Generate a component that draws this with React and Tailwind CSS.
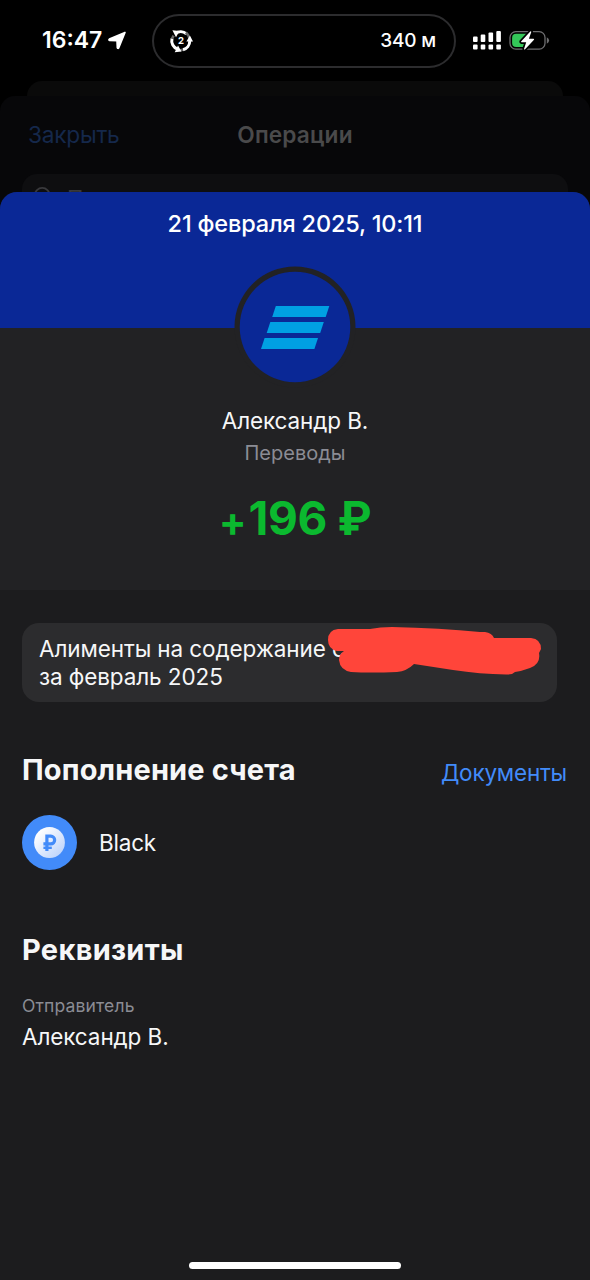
import React from 'react';

function StatusBar() {
  return (
    <div className="flex items-start h-[81px] pt-[14px] text-white">
      <div className="flex items-center w-[152px] h-[53px] pl-[42px]">
        <span className="text-[23px] font-semibold w-[65px] whitespace-nowrap">16:47</span>
        <svg className="w-[20px] h-[20px]" viewBox="0 0 20 20" fill="#fff" stroke="#fff" strokeWidth="1.6" strokeLinejoin="round">
          <path d="M18 1.4 L2.4 8 Q1.3 9 2.6 9.4 L10 9.8 L10.3 16.6 Q10.9 18 11.8 16.7 Z" />
        </svg>
      </div>

      {/* Navigation pill */}
      <div className="flex items-center justify-between w-[304px] h-[54px] pl-[15px] pr-[18px] rounded-full border-2 border-[#2c2c2e]">
        <svg className="w-[24px] h-[24px]" viewBox="0 0 24 24">
          <g fill="none" stroke="#fff" strokeWidth="3">
            <path d="M6.3 4.5 A9.2 9.2 0 0 1 17.5 4.9" />
            <path d="M20.8 12 A9.2 9.2 0 0 1 14 20.7" />
            <path d="M8.8 20.4 A9.2 9.2 0 0 1 3 9.5" />
          </g>
          <path d="M16.8 3.6 A9.6 9.6 0 0 1 20.5 9.4 M13.9 20.8 L10.9 21.2 M3.1 9.5 L4.6 6.6" fill="none" stroke="#6b6b6b" strokeWidth="2.6" />
          <g fill="#fff">
            <path d="M3.4 1.2 L10.4 2 L7 8.3 Z" />
            <path d="M17.4 12.6 L20.9 6.6 L24 12.6 Z" />
            <path d="M9 16.6 L12.5 22.6 L5.7 23.2 Z" />
          </g>
          <text x="12" y="15.3" fontSize="9.5" fontWeight="700" textAnchor="middle" fill="#fff" fontFamily="Inter, sans-serif">2</text>
        </svg>
        <span className="pt-px text-[19px] font-medium tracking-[-0.15px] whitespace-nowrap">340 м</span>
      </div>

      <div className="flex items-center h-[53px] pl-[16px] gap-[7px]">
        <svg className="w-[30px] h-[20px]" viewBox="0 0 30 20" fill="#fff">
          <rect x="1" y="5.5" width="4.6" height="5.5" rx="1" />
          <rect x="8.7" y="3.5" width="4.6" height="7.5" rx="1" />
          <rect x="16.5" y="1.5" width="4.6" height="9.5" rx="1" />
          <rect x="24.3" y="0" width="4.6" height="11" rx="1" />
          <rect x="1" y="13.5" width="4.6" height="5" rx="1" />
          <rect x="8.7" y="13.5" width="4.6" height="5" rx="1" />
          <rect x="16.5" y="13.5" width="4.6" height="5" rx="1" />
          <rect x="24.3" y="13.5" width="4.6" height="5" rx="1" />
        </svg>
        <svg className="w-[42px] h-[20px]" viewBox="0 0 42 20">
          <rect x="1" y="0.7" width="35" height="17.4" rx="5.8" fill="none" stroke="#6e6e70" strokeWidth="1.3" />
          <path d="M37.8 6.3 Q40.1 7.5 40.1 9.5 Q40.1 11.5 37.8 12.7 Z" fill="#6e6e70" />
          <path d="M7.2 2.8 H18 V16 H7.2 Q3.1 16 3.1 11.9 V6.9 Q3.1 2.8 7.2 2.8 Z" fill="#34c759" />
          <path d="M21.3 0.6 L12.1 10.4 Q11.8 11.2 12.6 11.3 H17.2 L15 17.9 Q15.1 19 16.1 18.3 L25 8.7 Q25.3 7.8 24.5 7.7 H19.9 L22.3 1.1 Q22.1 -0.1 21.3 0.6 Z" fill="#fff" stroke="#000" strokeWidth="3.4" paintOrder="stroke" />
        </svg>
      </div>
    </div>
  );
}

function OperationsBehind() {
  return (
    <div className="h-[96px] overflow-hidden">
      <div className="grid grid-cols-3 items-center h-[78px] px-[28px] text-[22.7px]">
        <span className="text-[#15284b] tracking-[-0.25px]">Закрыть</span>
        <span className="text-center font-semibold text-[#4a4a4b] tracking-[0.15px]">Операции</span>
      </div>
      <div className="flex mx-[22px] h-[54px] rounded-[15px] bg-[#0e0e10] pl-[12px] pt-[12px] gap-[14px] text-[#39393c]">
        <svg className="w-[19px] h-[19px]" viewBox="0 0 19 19" fill="none" stroke="currentColor" strokeWidth="1.8">
          <circle cx="8.2" cy="9.3" r="7.4" />
          <path d="M13.5 14.5 L18 19" />
        </svg>
        <span className="text-[22px] leading-[24px]">Поиск</span>
      </div>
    </div>
  );
}

function BankLogo() {
  return (
    <svg className="w-[122px] h-[122px]" viewBox="0 0 122 122">
      <circle cx="61" cy="61" r="60.5" fill="#222224" />
      <circle cx="61" cy="61" r="55.3" fill="#0a2896" />
      <g fill="#00a0e3">
        <path d="M41.8 39.9 H95.3 L91.7 50.9 H38.2 Z" />
        <path d="M36.3 55.9 H89.8 L86.2 66.9 H32.7 Z" />
        <path d="M30.6 71.9 H84 L80.4 82.9 H27 Z" />
      </g>
    </svg>
  );
}

function RubleIcon() {
  return (
    <svg className="w-[55px] h-[55px]" viewBox="0 0 55 55">
      <defs>
        <linearGradient id="coin" x1="0" y1="0" x2="1" y2="1">
          <stop offset="0.15" stopColor="#ffffff" />
          <stop offset="1" stopColor="#b4cefa" />
        </linearGradient>
      </defs>
      <circle cx="27.5" cy="27.5" r="27.5" fill="#428bf9" />
      <circle cx="27.5" cy="27.5" r="15.4" fill="url(#coin)" />
      <g fill="none" stroke="#428bf9" strokeWidth="3.2">
        <path d="M24.9 36 V21.2 H28.8 A3.8 3.8 0 0 1 28.8 28.9 H21.4" />
        <path d="M21.4 32.8 H29.8" strokeWidth="2.4" />
      </g>
    </svg>
  );
}

export default function App() {
  return (
    <div className="w-[590px] h-[1280px] overflow-hidden bg-black font-['Inter','Liberation_Sans',sans-serif]">
      <StatusBar />
      <div className="mx-[27px] h-[15px] rounded-t-[15px] bg-[#0a0a0a]" />

      <div className="rounded-t-[15px] bg-[#070709]">
        <OperationsBehind />

        <div className="flex flex-col h-[1088px] rounded-t-[17px] overflow-hidden bg-[#1c1c1e] text-[#f6f7f8]">
          <div className="h-[136px] shrink-0 bg-[#0a2896] pt-[16px] text-center text-[23.5px] leading-[32px] font-medium tracking-[-0.18px] text-white">
            21 февраля 2025, 10:11
          </div>

          <div className="flex flex-col items-center h-[262px] shrink-0 bg-[#222224]">
            <div className="-mt-[62px] h-[122px]">
              <BankLogo />
            </div>
            <div className="mt-[17px] text-[22.5px] leading-[32px] tracking-[-0.1px]">Александр В.</div>
            <div className="text-[20px] leading-[32px] text-[#8b8c94]">Переводы</div>
            <div className="flex items-center mt-[19px] text-[46px] leading-[60px] font-bold text-[#0bb92f] whitespace-nowrap">
              <span className="pt-[6px] mr-[2px] text-[41px] leading-[54px]">+</span>
              <span className="tracking-[-0.4px]">196 ₽</span>
            </div>
          </div>

          <div className="relative mt-[33px] ml-[22px] w-[535px] h-[79px] shrink-0 rounded-[17px] bg-[#2c2c2e] pl-[17px] pt-[12px] text-[22.5px] leading-[28px] tracking-[-0.1px] whitespace-nowrap">
            <p>Алименты на содержание с</p>
            <p>за февраль 2025</p>
            {/* marker strokes over the name */}
            <svg className="absolute left-[298px] top-[-8px] w-[240px] h-[70px]" viewBox="0 0 240 70">
              <path
                d="M18 14 H50 Q60 12 72 12 Q120 13 160 17 H165 Q172 18 174 23 H211 Q221 24 221 34 Q220 36 219 38 Q221 49 210 53 Q202 56 195 57 Q192 60 186 59.5 Q160 59 133 55 L94 49 Q87 56 77 57 Q50 58 31 57 Q20 55 19 45 Q19 39 24 36 H17 Q8 34 8 25 Q8 15 18 14 Z"
                fill="#ff453a"
              />
            </svg>
          </div>

          <div className="flex justify-between mt-[51px] pl-[22px] pr-[23px] h-[34px]">
            <h2 className="text-[29px] leading-[34px] font-bold tracking-[0.15px]">Пополнение счета</h2>
            <span className="pt-[3px] text-[22.5px] leading-[34px] tracking-[-0.2px] text-[#428bf9]">Документы</span>
          </div>

          <div className="flex items-center mt-[28px] pl-[22px] gap-[22px] h-[55px]">
            <RubleIcon />
            <span className="pt-px text-[22.5px] tracking-[-0.2px]">Black</span>
          </div>

          <h2 className="mt-[63px] pl-[22px] text-[29px] leading-[34px] font-bold tracking-[0.3px]">Реквизиты</h2>
          <div className="mt-[27px] pl-[22px] text-[17.5px] leading-[24px] tracking-[0.15px] text-[#8b8c94]">Отправитель</div>
          <div className="mt-[3px] pl-[22px] text-[22.5px] leading-[32px] tracking-[-0.1px]">Александр В.</div>

          <div className="mt-auto mb-[11px] mx-auto w-[212px] h-[7px] shrink-0 rounded-full bg-white" />
        </div>
      </div>
    </div>
  );
}
